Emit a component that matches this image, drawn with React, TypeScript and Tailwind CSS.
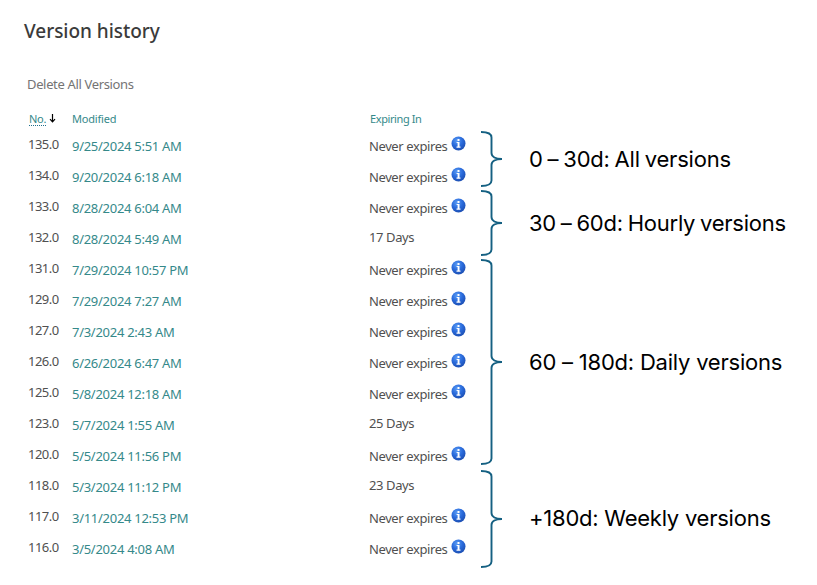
type Version = { no: string; modified: string; days?: number };

const versions: Version[] = [
  { no: "135.0", modified: "9/25/2024 5:51 AM" },
  { no: "134.0", modified: "9/20/2024 6:18 AM" },
  { no: "133.0", modified: "8/28/2024 6:04 AM" },
  { no: "132.0", modified: "8/28/2024 5:49 AM", days: 17 },
  { no: "131.0", modified: "7/29/2024 10:57 PM" },
  { no: "129.0", modified: "7/29/2024 7:27 AM" },
  { no: "127.0", modified: "7/3/2024 2:43 AM" },
  { no: "126.0", modified: "6/26/2024 6:47 AM" },
  { no: "125.0", modified: "5/8/2024 12:18 AM" },
  { no: "123.0", modified: "5/7/2024 1:55 AM", days: 25 },
  { no: "120.0", modified: "5/5/2024 11:56 PM" },
  { no: "118.0", modified: "5/3/2024 11:12 PM", days: 23 },
  { no: "117.0", modified: "3/11/2024 12:53 PM" },
  { no: "116.0", modified: "3/5/2024 4:08 AM" },
];

const groups = [
  { label: "0 – 30d: All versions", height: 56, mid: 28, gap: "mb-[3px]", style: "tracking-[-0.2px] [word-spacing:-1.1px]" },
  { label: "30 – 60d: Hourly versions", height: 66, mid: 33, gap: "mb-[3px]", style: "tracking-[-0.24px] [word-spacing:-1.1px]" },
  { label: "60 – 180d: Daily versions", height: 206, mid: 103, gap: "mb-[5px]", style: "tracking-[-0.22px]" },
  { label: "+180d: Weekly versions", height: 98, mid: 49, gap: "mb-0", style: "pb-0.5 tracking-[-0.24px]" },
];

function InfoIcon() {
  return (
    <svg width="15" height="15" viewBox="0 0 15 15" className="-mt-[0.5px] shrink-0">
      <defs>
        <radialGradient id="orb" cx="0.4" cy="0.3" r="0.75">
          <stop offset="0" stopColor="#5b9df5" />
          <stop offset="0.5" stopColor="#2a6bdc" />
          <stop offset="1" stopColor="#1b4cae" />
        </radialGradient>
      </defs>
      <circle cx="7.5" cy="7.5" r="7" fill="url(#orb)" />
      <path d="M6.5 3h2v1.9h-2zM5.6 6h2.9v4.6h1v1.1H5.5v-1.1h1.1V7.1h-1z" fill="#fff" />
    </svg>
  );
}

function Brace({ height, mid }: { height: number; mid: number }) {
  const end = height - 1;
  return (
    <svg width="22" height={height} viewBox={`0 0 22 ${height}`} fill="none" className="shrink-0">
      <path
        d={`M0 1C6.5 1 10.5 3 10.5 6.5V${mid - 6}C10.5 ${mid - 2.5} 14.5 ${mid} 21 ${mid}C14.5 ${mid} 10.5 ${mid + 2.5} 10.5 ${mid + 6}V${end - 5.5}C10.5 ${end - 2} 6.5 ${end} 0 ${end}`}
        stroke="#156082"
        strokeWidth="1.9"
      />
    </svg>
  );
}

export default function App() {
  return (
    <main className="flex h-[585px] w-[817px] overflow-hidden bg-white font-['Noto_Sans',sans-serif] whitespace-nowrap">
      <section className="w-[481px] shrink-0 pl-6">
        <h1 className="pt-[17px] text-[19px] leading-7 font-medium tracking-[-0.03px] text-[#3b3b3b]">
          Version history
        </h1>
        <div className="mt-[29px] pl-[3px] text-[13px] leading-5 tracking-[-0.35px] text-[#747474]">
          Delete All Versions
        </div>
        <div className="mt-[15px] flex h-5 items-center text-[11px] leading-5 tracking-[-0.28px] text-[#35898a]">
          <div className="flex w-12 items-center pl-[5px]">
            <span className="border-b border-dotted border-[#1f6f8a] leading-[13px]">No.</span>
            <svg width="7" height="9" viewBox="0 0 7 9" className="-mt-0.5 ml-[3px]" fill="none" stroke="#000" strokeWidth="1.2">
              <path d="M3.5 0v8M1 5.2l2.5 2.6L6 5.2" />
            </svg>
          </div>
          <div className="w-[298px] tracking-[-0.2px]">Modified</div>
          <div className="tracking-[-0.4px]">Expiring In</div>
        </div>
        <div className="text-[13px] leading-5 text-[#505050]">
          {versions.map((v) => (
            <div key={v.no} className="flex h-[31px] items-start">
              <div className="w-12 pt-[5px] pl-1 tracking-[-0.5px]">{v.no}</div>
              <div className="w-[297px] pt-[7px] tracking-[-0.28px] text-[#35898a]">{v.modified}</div>
              {v.days ? (
                <div className="pt-[5px] tracking-[-0.4px]">{v.days} Days</div>
              ) : (
                <div className="flex w-[97px] justify-between pt-[7px] tracking-[-0.4px]">
                  Never expires
                  <InfoIcon />
                </div>
              )}
            </div>
          ))}
        </div>
      </section>
      <section className="flex flex-col pt-[131px] font-['Inter',sans-serif] text-[22px] text-black">
        {groups.map((g) => (
          <div key={g.label} className={`flex items-center gap-[26px] ${g.gap}`}>
            <Brace height={g.height} mid={g.mid} />
            <span className={g.style}>{g.label}</span>
          </div>
        ))}
      </section>
    </main>
  );
}
